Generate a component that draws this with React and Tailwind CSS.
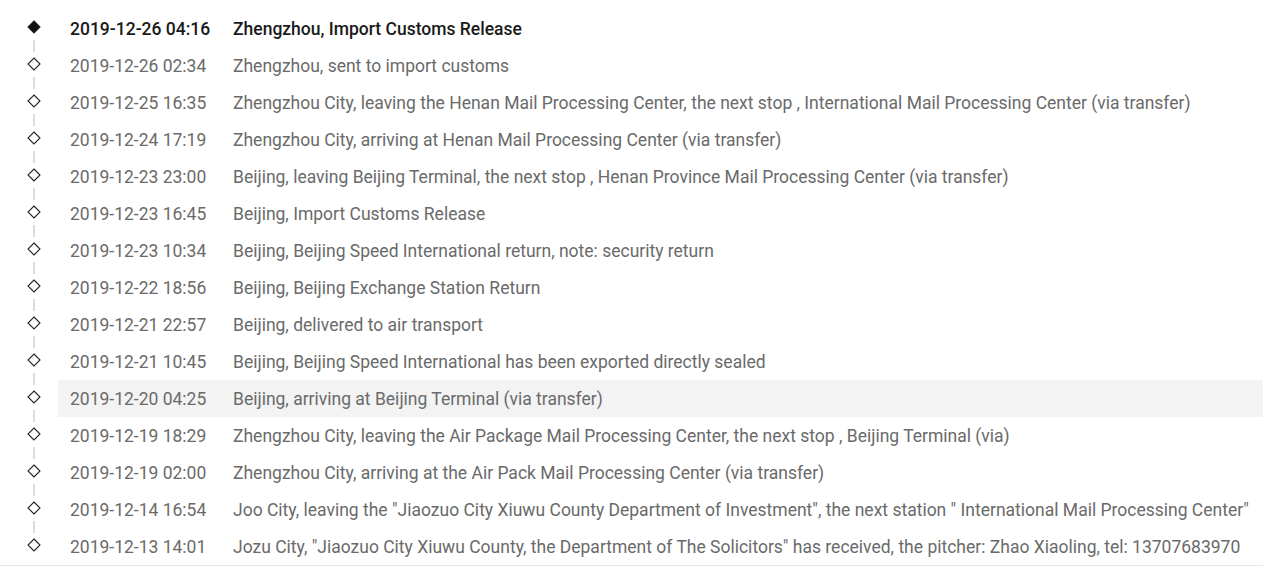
const rows = [
  ["2019-12-26 04:16", "Zhengzhou, Import Customs Release"],
  ["2019-12-26 02:34", "Zhengzhou, sent to import customs"],
  ["2019-12-25 16:35", "Zhengzhou City, leaving the Henan Mail Processing Center, the next stop , International Mail Processing Center (via transfer)"],
  ["2019-12-24 17:19", "Zhengzhou City, arriving at Henan Mail Processing Center (via transfer)"],
  ["2019-12-23 23:00", "Beijing, leaving Beijing Terminal, the next stop , Henan Province Mail Processing Center (via transfer)"],
  ["2019-12-23 16:45", "Beijing, Import Customs Release"],
  ["2019-12-23 10:34", "Beijing, Beijing Speed International return, note: security return"],
  ["2019-12-22 18:56", "Beijing, Beijing Exchange Station Return"],
  ["2019-12-21 22:57", "Beijing, delivered to air transport"],
  ["2019-12-21 10:45", "Beijing, Beijing Speed International has been exported directly sealed"],
  ["2019-12-20 04:25", "Beijing, arriving at Beijing Terminal (via transfer)"],
  ["2019-12-19 18:29", "Zhengzhou City, leaving the Air Package Mail Processing Center, the next stop , Beijing Terminal (via)"],
  ["2019-12-19 02:00", "Zhengzhou City, arriving at the Air Pack Mail Processing Center (via transfer)"],
  ["2019-12-14 16:54", "Joo City, leaving the \"Jiaozuo City Xiuwu County Department of Investment\", the next station \" International Mail Processing Center\""],
  ["2019-12-13 14:01", "Jozu City, \"Jiaozuo City Xiuwu County, the Department of The Solicitors\" has received, the pitcher: Zhao Xiaoling, tel: 13707683970"],
];

const Diamond = ({ filled }) => (
  <svg width="14" height="14" viewBox="0 0 14 14">
    <path
      d="M7 1 L13 7 L7 13 L1 7 Z"
      fill={filled ? "#111" : "#fff"}
      stroke="#222"
      strokeWidth="1.1"
    />
  </svg>
);

const Track = () => {
  return (
    <div
      className="w-full min-h-screen bg-white pt-[10px]"
      style={{ fontFamily: "Roboto, 'Liberation Sans', sans-serif" }}
    >
      <div className="border-b border-[#e6e6e6]">
        {rows.map(([time, text], i) => (
          <div key={i} className="relative flex flex-row h-[37px] items-center">
            <div className="w-[58px] h-full relative flex items-center justify-center pl-[10px] pb-[3px]">
              <Diamond filled={i === 0} />
              {i < rows.length - 1 && (
                <div className="absolute left-[33px] top-[30px] w-[2px] h-[12px] bg-[#dcdcdc]" />
              )}
            </div>
            <div
              className={
                "flex flex-row flex-1 h-full items-center pt-[2px] text-[17.5px] whitespace-nowrap " +
                (i === 10 ? "bg-[#f3f3f3] " : "") +
                (i === 0 ? "text-[#1a1a1a] font-medium" : "text-[#6a6a6a]")
              }
            >
              <span className="w-[175px] pl-[12px]">{time}</span>
              <span>{text}</span>
            </div>
          </div>
        ))}
      </div>
    </div>
  );
};

export default function App() {
  return <Track />;
}
